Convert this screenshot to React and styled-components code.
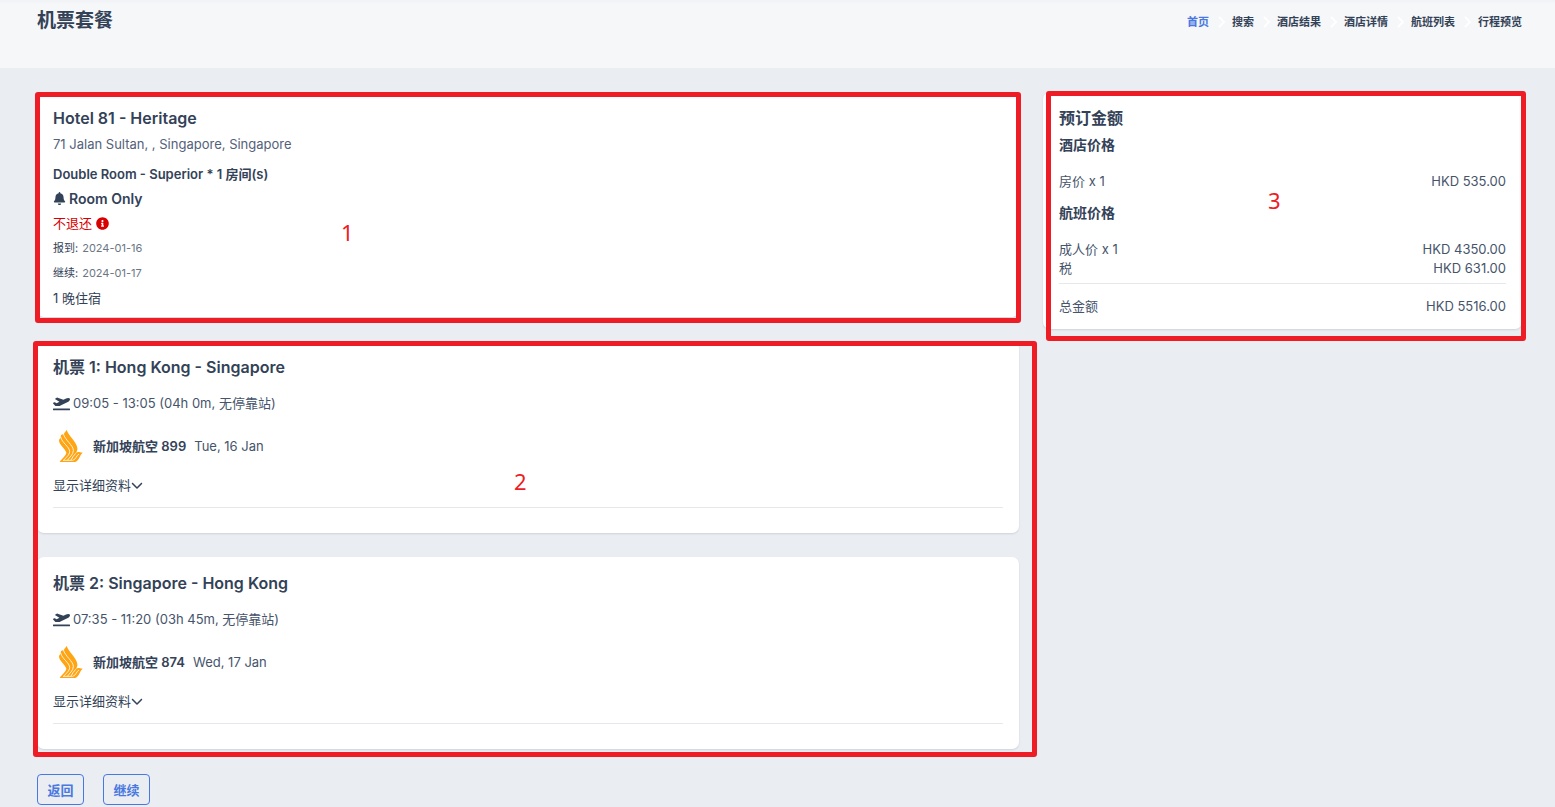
import React, { useState } from 'react';
import styled, { createGlobalStyle } from 'styled-components';
import { FaBell, FaInfoCircle, FaPlaneDeparture } from 'react-icons/fa';
import { FaChevronDown } from 'react-icons/fa6';

const GlobalStyle = createGlobalStyle`
  *, *::before, *::after {
    box-sizing: border-box;
  }

  body {
    margin: 0;
    background: #eaedf2;
    color: #334257;
    font-family: Inter, "Noto Sans CJK SC", sans-serif;
    font-size: 13px;
    line-height: 20px;
  }

  h1, h2, h3, p, dl, dd, ol {
    margin: 0;
    padding: 0;
  }
`;

const Header = styled.header`
  display: flex;
  justify-content: space-between;
  align-items: flex-start;
  height: 68px;
  padding: 9px 33px 0 37px;
  background: linear-gradient(#f1f2f5, #f6f7f9 5px);
`;

const PageTitle = styled.h1`
  font-size: 19px;
  line-height: 24px;
  font-weight: 700;
`;

const Crumbs = styled.ol`
  display: flex;
  list-style: none;
  padding-top: 3px;
  font-size: 11px;
  font-weight: 600;
`;

const Crumb = styled.li`
  display: flex;
  align-items: center;
`;

const CrumbLink = styled.a`
  color: ${({ $active }) => ($active ? '#4878e0' : '#334257')};
  text-decoration: none;
`;

const CrumbArrow = styled.svg`
  width: 7px;
  height: 12px;
  margin: 0 7px 0 9px;
  fill: none;
  stroke: #fff;
  stroke-width: 2;
`;

const Row = styled.main`
  display: flex;
  align-items: flex-start;
  padding: 24px 21px 0 25px;
`;

const Column = styled.div`
  flex: none;
  width: calc(100% * ${({ $span }) => $span} / 12);
  padding: 0 12px;
`;

const Card = styled.section`
  position: relative;
  padding: ${({ $pad }) => $pad};
  background: #fff;
  border-radius: 7px;
  box-shadow: 0 1px 2px rgba(50, 60, 80, 0.14);
`;

const Flights = styled.div`
  position: relative;
  display: flex;
  flex-direction: column;
  gap: 24px;
  margin-top: 24px;
`;

const Mark = styled.div`
  position: absolute;
  inset: ${({ $inset }) => $inset};
  z-index: 2;
  border: 5px solid #ee1c25;
  border-radius: 3px;
  pointer-events: none;
`;

const MarkNumber = styled.span`
  position: absolute;
  left: ${({ $left }) => $left};
  top: ${({ $top }) => $top};
  color: #ee1c25;
  font-family: "Noto Sans", sans-serif;
  font-size: 22px;
  line-height: 24px;
`;

const CardTitle = styled.h2`
  font-size: 16px;
  line-height: 24px;
  font-weight: ${({ $bold }) => ($bold ? 700 : 600)};
`;

const Address = styled.p`
  margin-top: 4px;
  color: #53617a;
`;

const RoomName = styled.h3`
  margin-top: 10px;
  font-size: 13px;
  font-weight: 600;
`;

const Board = styled.p`
  display: flex;
  align-items: center;
  gap: 3px;
  margin-top: 2px;
  font-size: 14px;
  line-height: 25px;
  font-weight: 600;
`;

const Line = styled.p`
  display: flex;
  align-items: center;
  gap: 4px;
  line-height: 25px;
  font-size: ${({ $small }) => ($small ? '11px' : '13px')};
  color: ${({ $danger }) => ($danger ? '#d80000' : 'inherit')};
`;

const Time = styled.time`
  color: #6b7683;
`;

const FlightTime = styled.p`
  display: flex;
  align-items: center;
  gap: 3px;
  margin-top: 14px;
  color: #46546b;

  svg {
    color: #334257;
  }
`;

const Airline = styled.div`
  display: flex;
  align-items: center;
  height: 34px;
  margin-top: 16px;
  color: #46546b;

  strong {
    margin: 0 8px 0 10px;
    color: #334257;
    font-weight: 600;
  }
`;

const DetailToggle = styled.button`
  display: flex;
  align-items: center;
  margin-top: 12px;
  padding: 0;
  border: 0;
  background: none;
  color: inherit;
  font: inherit;
  cursor: pointer;
`;

const Divider = styled.hr`
  margin: ${({ $top }) => $top} 0 0;
  border: 0;
  border-top: 1px solid #e6e8eb;
`;

const PriceHeading = styled.h3`
  margin-top: ${({ $top }) => $top};
  font-size: 14px;
  line-height: 20px;
  font-weight: 700;
`;

const Prices = styled.dl`
  margin-top: ${({ $top }) => $top};
  color: #46546b;
`;

const PriceRow = styled.div`
  display: flex;
  justify-content: space-between;
  line-height: 19px;
`;

const Actions = styled.footer`
  display: flex;
  gap: 19px;
  padding: 25px 37px 2px;
`;

const ActionButton = styled.button`
  min-width: 47px;
  height: 31px;
  padding: 0 9px;
  border: 1px solid #4878e0;
  border-radius: 4px;
  background: transparent;
  color: #4878e0;
  font-family: inherit;
  font-size: 13px;
  font-weight: 600;
  cursor: pointer;
`;

const LogoSvg = styled.svg`
  width: 24px;
  height: 32px;
  margin-left: 6px;
`;

const crumbs = ['首页', '搜索', '酒店结果', '酒店详情', '航班列表', '行程预览'];

const flights = [
  {
    title: '机票 1: Hong Kong - Singapore',
    time: '09:05 - 13:05 (04h 0m, 无停靠站)',
    airline: '新加坡航空 899',
    date: 'Tue, 16 Jan',
  },
  {
    title: '机票 2: Singapore - Hong Kong',
    time: '07:35 - 11:20 (03h 45m, 无停靠站)',
    airline: '新加坡航空 874',
    date: 'Wed, 17 Jan',
  },
];

const AirlineLogo = () => (
  <LogoSvg viewBox="0 0 72 96" aria-hidden="true">
    <path
      fill="#ffa412"
      d="M23 0C29 18 53 36 55 54C56 60 53 66 50 71C53 67 57 66 60 66L71 68C63 74 62 86 54 93C51 96 47 96 42 96H2C8 86 20 78 22 68C18 54 0 46 0 30L5 22L6 15L14 12Z"
    />
    <g fill="none" stroke="#fff" strokeWidth="2.5">
      <path d="M5 21C9 39 32 50 32 65C32 75 20 83 14 91" />
      <path d="M13 11C18 31 43 45 43 62C43 74 31 82 25 91" />
      <path d="M12 91H41C51 89 52 76 60 72" />
      <path d="M50 70C44 76 40 83 36 90" />
    </g>
  </LogoSvg>
);

const FlightCard = ({ flight }) => {
  const [open, setOpen] = useState(false);

  return (
    <Card $pad="14px 16px 25px">
      <CardTitle>{flight.title}</CardTitle>
      <FlightTime>
        <FaPlaneDeparture size={17} />
        {flight.time}
      </FlightTime>
      <Airline>
        <AirlineLogo />
        <strong>{flight.airline}</strong>
        <span>{flight.date}</span>
      </Airline>
      <DetailToggle type="button" aria-expanded={open} onClick={() => setOpen(!open)}>
        显示详细资料
        <FaChevronDown size={12} />
      </DetailToggle>
      <Divider $top="12px" />
    </Card>
  );
};

const App = () => {
  return (
    <>
      <GlobalStyle />
      <Header>
        <PageTitle>机票套餐</PageTitle>
        <nav>
          <Crumbs>
            {crumbs.map((name, index) => (
              <Crumb key={name}>
                {index > 0 && (
                  <CrumbArrow viewBox="0 0 7 12">
                    <path d="M1 1l5 5-5 5" />
                  </CrumbArrow>
                )}
                <CrumbLink href="#" $active={index === 0}>{name}</CrumbLink>
              </Crumb>
            ))}
          </Crumbs>
        </nav>
      </Header>
      <Row>
        <Column $span={8}>
          <Card $pad="14px 16px 6px">
            <CardTitle>Hotel 81 - Heritage</CardTitle>
            <Address>71 Jalan Sultan, , Singapore, Singapore</Address>
            <RoomName>Double Room - Superior * 1 房间(s)</RoomName>
            <Board>
              <FaBell size={13} />
              Room Only
            </Board>
            <Line $danger>
              不退还
              <FaInfoCircle size={13} />
            </Line>
            <Line $small>报到: <Time>2024-01-16</Time></Line>
            <Line $small>继续: <Time>2024-01-17</Time></Line>
            <Line>1 晚住宿</Line>
            <Mark $inset="0 -2px -6px -2px" />
            <MarkNumber $left="304px" $top="128px">1</MarkNumber>
          </Card>
          <Flights>
            {flights.map((flight) => (
              <FlightCard key={flight.title} flight={flight} />
            ))}
            <Mark $inset="0 -18px -8px -4px" />
            <MarkNumber $left="477px" $top="128px">2</MarkNumber>
          </Flights>
        </Column>
        <Column $span={4}>
          <Card $pad="14px 16px 13px">
            <CardTitle $bold>预订金额</CardTitle>
            <PriceHeading $top="5px">酒店价格</PriceHeading>
            <Prices $top="17px">
              <PriceRow><dt>房价 x 1</dt><dd>HKD 535.00</dd></PriceRow>
            </Prices>
            <PriceHeading $top="12px">航班价格</PriceHeading>
            <Prices $top="17px">
              <PriceRow><dt>成人价 x 1</dt><dd>HKD 4350.00</dd></PriceRow>
              <PriceRow><dt>税</dt><dd>HKD 631.00</dd></PriceRow>
            </Prices>
            <Divider $top="5px" />
            <Prices $top="13px">
              <PriceRow><dt>总金额</dt><dd>HKD 5516.00</dd></PriceRow>
            </Prices>
            <Mark $inset="-1px -4px -12px 3px" />
            <MarkNumber $left="225px" $top="96px">3</MarkNumber>
          </Card>
        </Column>
      </Row>
      <Actions>
        <ActionButton type="button">返回</ActionButton>
        <ActionButton type="button">继续</ActionButton>
      </Actions>
    </>
  );
};

export default App;
